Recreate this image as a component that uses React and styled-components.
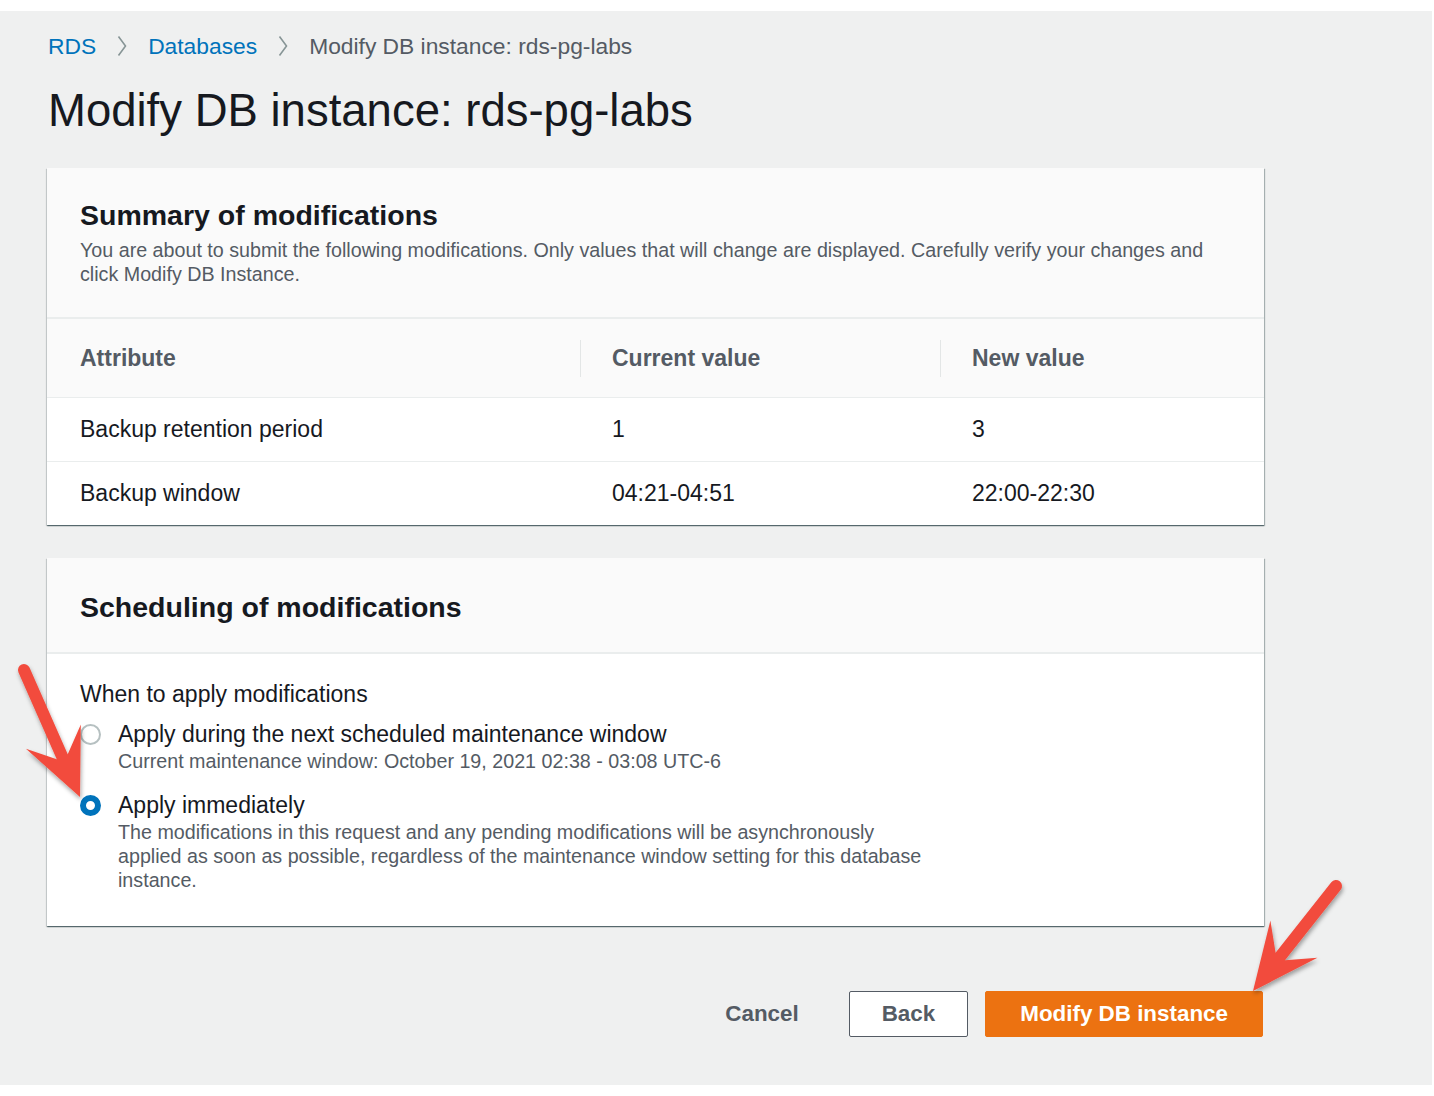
import React from "react";
import styled, { createGlobalStyle } from "styled-components";

const GlobalStyle = createGlobalStyle`
  body {
    margin: 0;
    background: #ffffff;
    font-family: "Liberation Sans", Arial, sans-serif;
    color: #16191f;
  }
`;

const Root = styled.div`
  position: relative;
  width: 1434px;
  height: 1096px;
  overflow: hidden;
`;

const Page = styled.div`
  margin-top: 11px;
  width: 1432px;
  height: 1074px;
  box-sizing: border-box;
  background: #eff0f0;
  padding: 16px 0 0 47px;
`;

const Crumbs = styled.nav`
  display: flex;
  align-items: center;
  gap: 21px;
  height: 38px;
  padding-left: 1px;
  font-size: 22.8px;
`;

const CrumbLink = styled.a`
  color: #0073bb;
  text-decoration: none;
`;

const CrumbCurrent = styled.span`
  color: #545b64;
`;

const Title = styled.h1`
  margin: 19px 0 0 1px;
  font-size: 45.5px;
  line-height: 54px;
  font-weight: 400;
  color: #16191f;
`;

const Panel = styled.section`
  width: 1217px;
  margin-top: ${(p) => p.$gap}px;
  background: #ffffff;
  box-shadow: 0 1px 1px 0 rgba(0, 28, 36, 0.45), 1px 1px 1px 0 rgba(0, 28, 36, 0.25),
    -1px 1px 1px 0 rgba(0, 28, 36, 0.12);
`;

const PanelHeader = styled.header`
  background: #fafafa;
  padding: ${(p) => p.$pad};
  border-bottom: 2px solid #eaeded;
`;

const PanelTitle = styled.h2`
  margin: 0;
  font-size: 28.5px;
  line-height: 36px;
  font-weight: 700;
  color: #16191f;
`;

const PanelDesc = styled.p`
  margin: 5px 0 0;
  font-size: 19.7px;
  line-height: 24px;
  color: #545b64;
`;

const Table = styled.table`
  width: 100%;
  border-collapse: collapse;
  table-layout: fixed;
`;

const Th = styled.th`
  position: relative;
  height: 78px;
  padding: 0 0 0 32px;
  background: #fafafa;
  text-align: left;
  font-size: 23px;
  font-weight: 700;
  color: #545b64;

  &:first-child {
    padding-left: 33px;
  }

  &:not(:first-child)::before {
    content: "";
    position: absolute;
    left: 0;
    top: 21px;
    bottom: 20px;
    width: 1px;
    background: #e3e6e6;
  }
`;

const Td = styled.td`
  height: 63px;
  padding: 0 0 0 32px;
  border-top: 1px solid #eaeded;
  font-size: 23px;
  color: #16191f;

  &:first-child {
    padding-left: 33px;
  }
`;

const PanelBody = styled.div`
  padding: 25px 33px 34px;
`;

const FieldLabel = styled.div`
  font-size: 23px;
  line-height: 30px;
  color: #16191f;
`;

const Options = styled.div`
  display: flex;
  flex-direction: column;
  gap: 17px;
  margin-top: 10px;
`;

const Option = styled.label`
  display: grid;
  grid-template-columns: 22px 1fr;
  column-gap: 16px;
`;

const Radio = styled.span`
  box-sizing: border-box;
  width: 21px;
  height: 21px;
  margin-top: 5px;
  border-radius: 50%;
  border: ${(p) => (p.$checked ? "6px solid #0073bb" : "2px solid #b6c0c1")};
  background: #ffffff;
`;

const OptionTitle = styled.div`
  font-size: 23px;
  line-height: 30px;
  color: #16191f;
`;

const OptionDesc = styled.div`
  max-width: 805px;
  font-size: 19.7px;
  line-height: 24px;
  color: #545b64;
`;

const Actions = styled.div`
  display: flex;
  justify-content: flex-end;
  gap: 17px;
  width: 1216px;
  margin-top: 65px;
`;

const Button = styled.button`
  height: 46px;
  padding: 0 ${(p) => (p.$variant === "primary" ? 34 : 32)}px;
  border-radius: 2px;
  font-family: inherit;
  font-size: 22.4px;
  font-weight: 700;
  cursor: pointer;
  border: ${(p) =>
    p.$variant === "normal"
      ? "1px solid #545b64"
      : p.$variant === "primary"
      ? "1px solid #ec7211"
      : "1px solid transparent"};
  background: ${(p) =>
    p.$variant === "primary" ? "#ec7211" : p.$variant === "normal" ? "#ffffff" : "transparent"};
  color: ${(p) => (p.$variant === "primary" ? "#ffffff" : "#545b64")};
`;

const Overlay = styled.svg`
  position: absolute;
  left: 0;
  top: 0;
  pointer-events: none;
`;

const Chevron = () => (
  <svg width="10" height="22" viewBox="0 0 10 22">
    <path d="M1.5 1.5 L8.5 11 L1.5 20.5" fill="none" stroke="#879596" strokeWidth="1.6" />
  </svg>
);

// skitch-style annotation arrow from tail to tip
const Arrow = ({ from, to }) => {
  const [tx, ty] = from;
  const [px, py] = to;
  const len = Math.hypot(px - tx, py - ty);
  const ux = (px - tx) / len;
  const uy = (py - ty) / len;
  const nx = -uy;
  const ny = ux;
  const headLen = 60;
  const half = 30;
  const bx = px - ux * headLen;
  const by = py - uy * headLen;
  const notchX = px - ux * (headLen - 16);
  const notchY = py - uy * (headLen - 16);
  const head = [
    [px, py],
    [bx + nx * half - ux * 6, by + ny * half - uy * 6],
    [notchX + nx * 6, notchY + ny * 6],
    [notchX - nx * 6, notchY - ny * 6],
    [bx - nx * half - ux * 6, by - ny * half - uy * 6],
  ]
    .map((pt) => pt.join(","))
    .join(" ");
  return (
    <g filter="url(#arrowShadow)">
      <line
        x1={tx}
        y1={ty}
        x2={notchX}
        y2={notchY}
        stroke="#f24c3d"
        strokeWidth="12"
        strokeLinecap="round"
      />
      <polygon points={head} fill="#f24c3d" />
    </g>
  );
};

const rows = [
  { attr: "Backup retention period", current: "1", next: "3" },
  { attr: "Backup window", current: "04:21-04:51", next: "22:00-22:30" },
];

export default function App() {
  return (
    <Root>
      <GlobalStyle />
      <Page>
        <Crumbs>
          <CrumbLink href="#">RDS</CrumbLink>
          <Chevron />
          <CrumbLink href="#">Databases</CrumbLink>
          <Chevron />
          <CrumbCurrent>Modify DB instance: rds-pg-labs</CrumbCurrent>
        </Crumbs>
        <Title>Modify DB instance: rds-pg-labs</Title>

        <Panel $gap={30}>
          <PanelHeader $pad="29px 33px 31px">
            <PanelTitle>Summary of modifications</PanelTitle>
            <PanelDesc>
              You are about to submit the following modifications. Only values that will change are
              displayed. Carefully verify your changes and click Modify DB Instance.
            </PanelDesc>
          </PanelHeader>
          <Table>
            <colgroup>
              <col style={{ width: 533 }} />
              <col style={{ width: 360 }} />
              <col />
            </colgroup>
            <thead>
              <tr>
                <Th>Attribute</Th>
                <Th>Current value</Th>
                <Th>New value</Th>
              </tr>
            </thead>
            <tbody>
              {rows.map((r) => (
                <tr key={r.attr}>
                  <Td>{r.attr}</Td>
                  <Td>{r.current}</Td>
                  <Td>{r.next}</Td>
                </tr>
              ))}
            </tbody>
          </Table>
        </Panel>

        <Panel $gap={33}>
          <PanelHeader $pad="31px 33px 27px">
            <PanelTitle>Scheduling of modifications</PanelTitle>
          </PanelHeader>
          <PanelBody>
            <FieldLabel>When to apply modifications</FieldLabel>
            <Options>
              <Option>
                <Radio />
                <div>
                  <OptionTitle>Apply during the next scheduled maintenance window</OptionTitle>
                  <OptionDesc>
                    Current maintenance window: October 19, 2021 02:38 - 03:08 UTC-6
                  </OptionDesc>
                </div>
              </Option>
              <Option>
                <Radio $checked />
                <div>
                  <OptionTitle>Apply immediately</OptionTitle>
                  <OptionDesc>
                    The modifications in this request and any pending modifications will be
                    asynchronously applied as soon as possible, regardless of the maintenance window
                    setting for this database instance.
                  </OptionDesc>
                </div>
              </Option>
            </Options>
          </PanelBody>
        </Panel>

        <Actions>
          <Button $variant="link">Cancel</Button>
          <Button $variant="normal">Back</Button>
          <Button $variant="primary">Modify DB instance</Button>
        </Actions>
      </Page>

      <Overlay width="1434" height="1096" viewBox="0 0 1434 1096">
        <defs>
          <filter id="arrowShadow" x="-20%" y="-20%" width="140%" height="140%">
            <feDropShadow dx="1" dy="3" stdDeviation="2" floodColor="#000" floodOpacity="0.35" />
          </filter>
        </defs>
        <Arrow from={[24, 670]} to={[80, 797]} />
        <Arrow from={[1336, 886]} to={[1253, 991]} />
      </Overlay>
    </Root>
  );
}
